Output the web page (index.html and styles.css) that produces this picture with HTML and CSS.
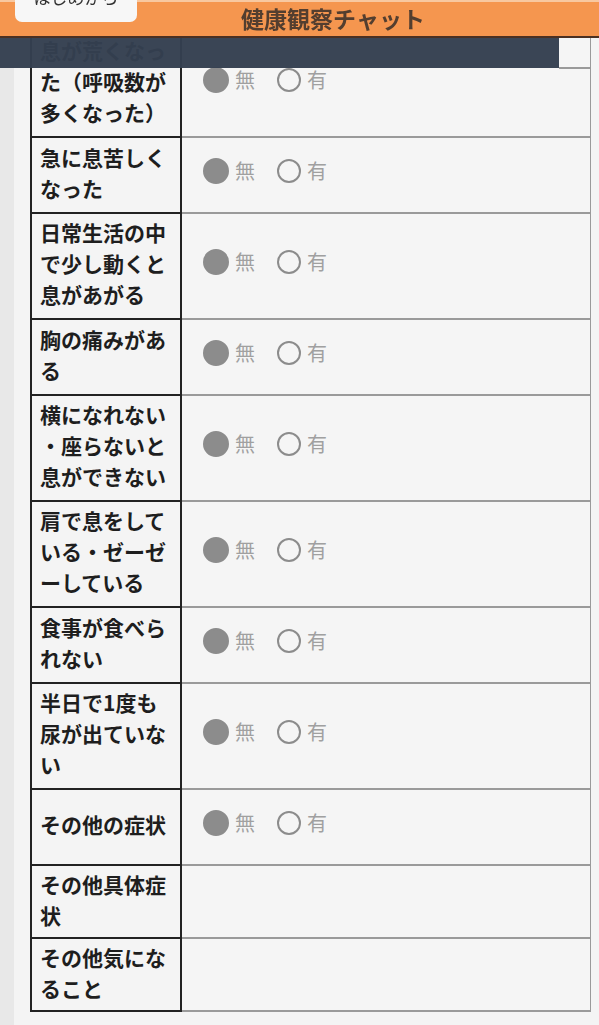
FILE: index.html
```html
<!DOCTYPE html>
<html lang="ja">
<head>
<meta charset="utf-8">
<title>健康観察チャット</title>
<link rel="stylesheet" href="styles.css">
</head>
<body>
<header class="topbar">
  <button class="restart" type="button">はじめから</button>
  <h1 class="title">健康観察チャット</h1>
</header>
<div class="subbar"><div class="subbar-fill"></div><div class="subbar-end"></div></div>
<main class="page">
  <table class="sheet">
    <tr><th>息が荒くなった（呼吸数が多くなった）</th><td class="ans"><div class="opts"><span class="opt"><span class="dot on"></span>無</span><span class="opt"><span class="dot"></span>有</span></div></td></tr>
    <tr><th>急に息苦しくなった</th><td class="ans"><div class="opts"><span class="opt"><span class="dot on"></span>無</span><span class="opt"><span class="dot"></span>有</span></div></td></tr>
    <tr><th>日常生活の中で少し動くと息があがる</th><td class="ans"><div class="opts"><span class="opt"><span class="dot on"></span>無</span><span class="opt"><span class="dot"></span>有</span></div></td></tr>
    <tr><th>胸の痛みがある</th><td class="ans"><div class="opts"><span class="opt"><span class="dot on"></span>無</span><span class="opt"><span class="dot"></span>有</span></div></td></tr>
    <tr><th>横になれない・座らないと息ができない</th><td class="ans"><div class="opts"><span class="opt"><span class="dot on"></span>無</span><span class="opt"><span class="dot"></span>有</span></div></td></tr>
    <tr><th>肩で息をしている・ゼーゼーしている</th><td class="ans"><div class="opts"><span class="opt"><span class="dot on"></span>無</span><span class="opt"><span class="dot"></span>有</span></div></td></tr>
    <tr><th>食事が食べられない</th><td class="ans"><div class="opts"><span class="opt"><span class="dot on"></span>無</span><span class="opt"><span class="dot"></span>有</span></div></td></tr>
    <tr><th>半日で1度も尿が出ていない</th><td class="ans"><div class="opts"><span class="opt"><span class="dot on"></span>無</span><span class="opt"><span class="dot"></span>有</span></div></td></tr>
    <tr><th>その他の症状</th><td class="ans"><div class="opts"><span class="opt"><span class="dot on"></span>無</span><span class="opt"><span class="dot"></span>有</span></div></td></tr>
    <tr class="free"><th>その他具体症状</th><td class="ans"></td></tr>
    <tr class="free"><th>その他気になること</th><td class="ans"></td></tr>
  </table>
</main>
</body>
</html>
```
FILE: styles.css
```css
html, body {
  margin: 0;
  padding: 0;
}
body {
  background: #f4f4f4;
  font-family: "Noto Sans CJK JP", "Noto Sans", sans-serif;
  color: #222;
}
.topbar {
  position: fixed;
  top: 0;
  left: 0;
  right: 0;
  height: 36px;
  background: #f5964f;
  border-bottom: 2px solid #4b3022;
  box-shadow: inset 0 2px 0 #f8c8a0;
  z-index: 10;
}
.restart {
  position: absolute;
  left: 15px;
  top: -25px;
  width: 122px;
  padding: 12px 0 15px;
  border: none;
  border-radius: 7px;
  background: #f7f7f7;
  color: #333;
  font-family: inherit;
  font-size: 17px;
  line-height: 20px;
}
.title {
  margin: 0;
  padding-left: 67px;
  font-size: 23px;
  font-weight: 700;
  line-height: 36px;
  text-align: center;
  color: #533e2f;
}
.subbar {
  position: fixed;
  top: 38px;
  left: 0;
  width: 591px;
  display: flex;
  z-index: 9;
}
.subbar-fill {
  width: 559px;
  height: 30px;
  background: rgba(52, 63, 80, 0.97);
}
.subbar-end {
  flex: 1;
  height: 31px;
  box-sizing: border-box;
  border-bottom: 2px solid #9a9a9a;
}
.page {
  border-left: 14px solid #e8e8e8;
  padding: 30px 0 60px 16px;
}
.sheet {
  width: 561px;
  table-layout: fixed;
  border-collapse: separate;
  border-spacing: 0;
  border-top: 2px solid #222;
}
.sheet th {
  box-sizing: border-box;
  width: 152px;
  padding: 3px 4px 8px 8px;
  border-left: 2px solid #222;
  border-right: 2px solid #222;
  border-bottom: 2px solid #222;
  text-align: left;
  vertical-align: middle;
  font-size: 21px;
  font-weight: 700;
  line-height: 31px;
  color: #1e1e1e;
  line-break: anywhere;
  background: #f4f4f4;
}
.sheet .free th {
  padding-bottom: 6px;
}
.sheet .ans {
  padding: 0;
  border-right: 1px solid #9a9a9a;
  border-bottom: 2px solid #9a9a9a;
  vertical-align: middle;
  background: #f5f5f5;
}
.opts {
  height: 74px;
  box-sizing: border-box;
  padding: 0 0 9px 21px;
  display: flex;
  align-items: center;
  gap: 22px;
}
.opt {
  display: flex;
  align-items: center;
  gap: 6px;
  font-size: 20px;
  line-height: 24px;
  color: #a0a0a0;
}
.dot {
  width: 24px;
  height: 24px;
  box-sizing: border-box;
  border-radius: 50%;
  border: 2.5px solid #8c8c8c;
}
.dot.on {
  width: 26px;
  height: 26px;
  background: #8c8c8c;
}
```
